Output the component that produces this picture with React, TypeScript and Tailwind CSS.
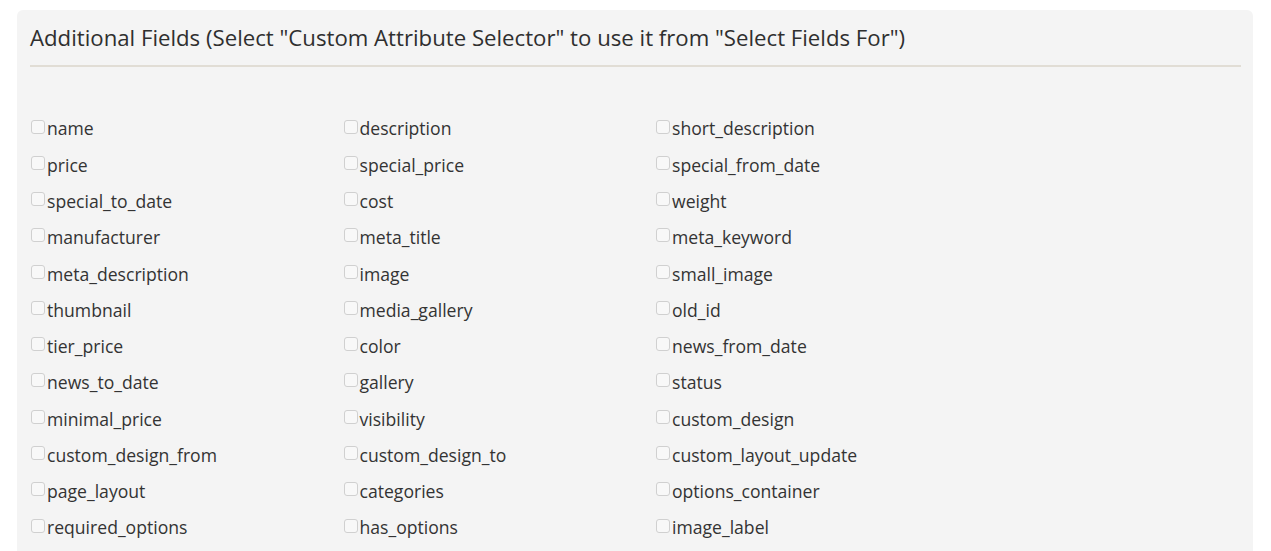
import React from "react";

const fields = [
  "name", "description", "short_description",
  "price", "special_price", "special_from_date",
  "special_to_date", "cost", "weight",
  "manufacturer", "meta_title", "meta_keyword",
  "meta_description", "image", "small_image",
  "thumbnail", "media_gallery", "old_id",
  "tier_price", "color", "news_from_date",
  "news_to_date", "gallery", "status",
  "minimal_price", "visibility", "custom_design",
  "custom_design_from", "custom_design_to", "custom_layout_update",
  "page_layout", "categories", "options_container",
  "required_options", "has_options", "image_label",
];

export default function App() {
  return (
    <div className="min-h-[551px] bg-white pt-[10px] pl-[17px]" style={{ fontFamily: '"Open Sans", sans-serif' }}>
      <div className="w-[1236px] rounded-[6px] bg-[#f4f4f4] pl-[13px] pr-[12px] pt-[14px] pb-[20px]">
        <h2 className="text-[22.2px] leading-[28px] text-[#2f2f2f] font-normal">
          Additional Fields (Select "Custom Attribute Selector" to use it from "Select Fields For")
        </h2>
        <div className="mt-[13px] h-[2px] bg-[#e1ddd5]" />
        <div className="mt-[43.5px] grid grid-cols-[312.5px_312.5px_312.5px]">
          {fields.map((f) => (
            <label key={f} className="flex h-[36.27px] items-center text-[17.6px] text-[#333]">
              <span className="mb-[4px] mr-[2px] ml-[1px] inline-block h-[14px] w-[14px] shrink-0 rounded-[3px] border-[1.5px] border-[#d0d0d0] bg-[#f8f8f8]" />
              <span>{f}</span>
            </label>
          ))}
        </div>
      </div>
    </div>
  );
}
